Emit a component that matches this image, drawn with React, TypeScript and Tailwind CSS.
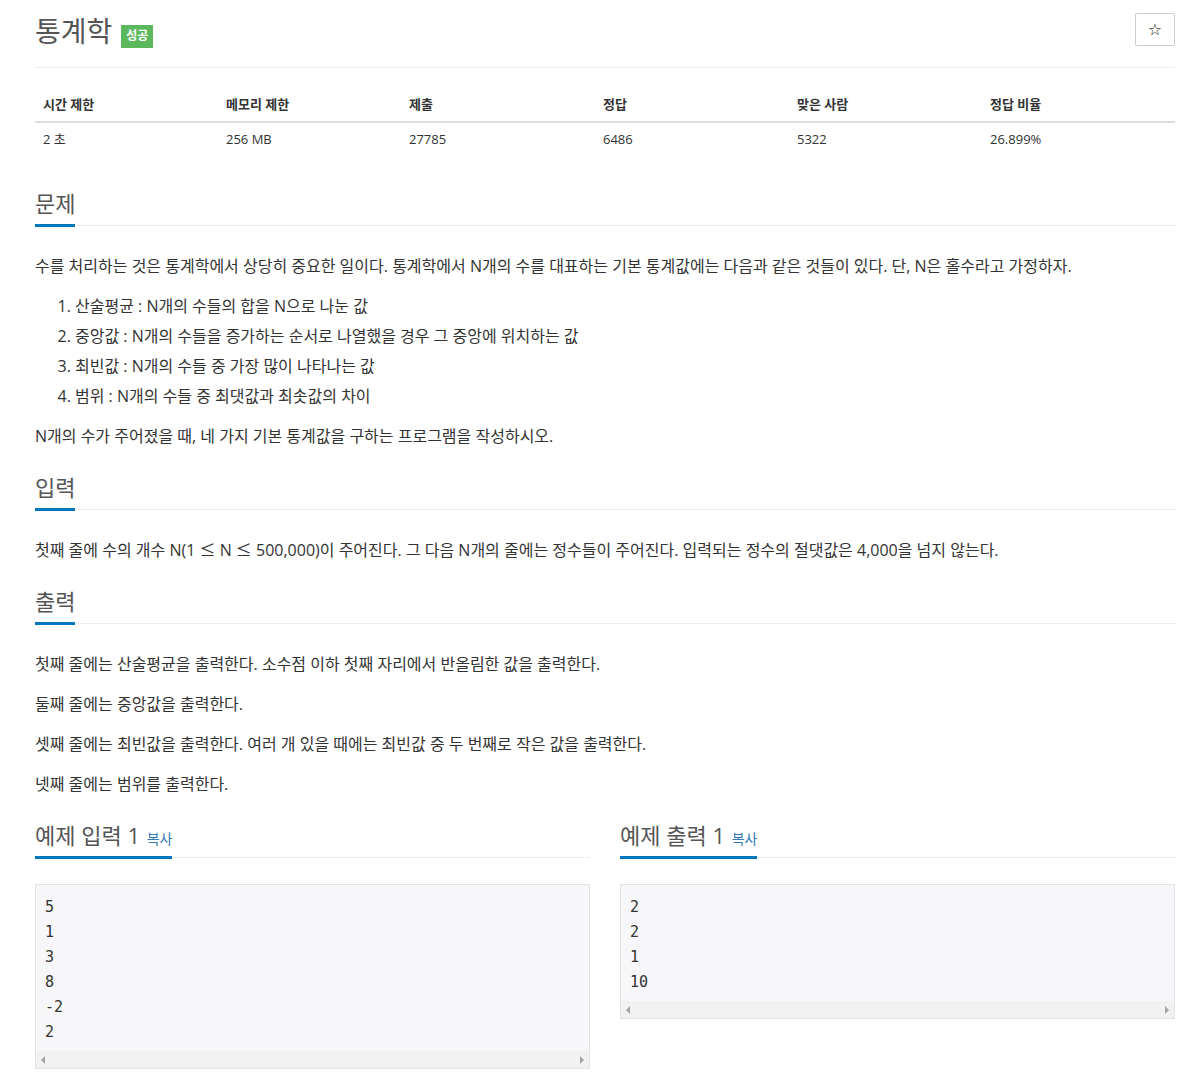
import React from "react";

const H2 = ({ children }: { children: React.ReactNode }) => (
  <h2 className="inline-block h-[38px] -mb-[2px] border-b-[3px] border-[#0076c0] pb-[7px] text-[22px] leading-[28px] font-normal text-[#555] whitespace-nowrap">
    {children}
  </h2>
);

const Heading = ({ children, mt = "mt-[22px]" }: { children: React.ReactNode; mt?: string }) => (
  <div className={`${mt} mb-[25px] border-b border-dotted border-[#dcdcdc]`}>
    <H2>{children}</H2>
  </div>
);

const P = ({ children }: { children: React.ReactNode }) => (
  <p className="mb-[10px] text-[16px] leading-[30px]">{children}</p>
);

const Le = () => <span className="font-['Noto_Sans_CJK_KR',sans-serif] leading-none">≤</span>;

const Scrollbar = () => (
  <div className="flex h-[17px] items-center justify-between bg-[#f1f1f1] px-[5px]">
    <div className="h-0 w-0 border-y-[4px] border-r-[4px] border-y-transparent border-r-[#a3a3a3]" />
    <div className="h-0 w-0 border-y-[4px] border-l-[4px] border-y-transparent border-l-[#a3a3a3]" />
  </div>
);

const Sample = ({ title, lines }: { title: string; lines: string[] }) => (
  <div>
    <div className="mt-[12px] mb-[26px] border-b border-dotted border-[#dcdcdc]">
      <H2>
        {title} <span className="ml-[1px] text-[14px] text-[#337ab7]">복사</span>
      </H2>
    </div>
    <div className="border border-[#e1e1e8] bg-[#f7f7f9]">
      <pre className="px-[9px] pt-[10px] pb-[6px] font-['DejaVu_Sans_Mono',monospace] text-[15px] leading-[25px] text-[#333]">
        {lines.join("\n")}
      </pre>
      <Scrollbar />
    </div>
  </div>
);

export default function App() {
  const cols = ["시간 제한", "메모리 제한", "제출", "정답", "맞은 사람", "정답 비율"];
  const vals = ["2 초", "256 MB", "27785", "6486", "5322", "26.899%"];
  return (
    <div className="min-h-[1087px] w-[1201px] bg-white font-['Open_Sans','Noto_Sans_CJK_KR',sans-serif] text-[#333]">
      <div className="ml-[35px] w-[1140px]">
        <div className="flex h-[68px] items-start justify-between border-b border-[#eee] pt-[13px]">
          <h1 className="flex h-[33px] items-start gap-[9px] font-normal text-[#555]">
            <span className="mt-[2px] text-[28px] leading-[33px]">통계학</span>
            <span className="mt-[12px] bg-[#5cb85c] px-[5px] pt-[3px] pb-[4px] text-[12px] leading-[16px] font-bold text-white">
              성공
            </span>
          </h1>
          <button className="flex h-[33px] w-[40px] items-center justify-center rounded-[2px] border border-[#ccc] bg-white font-['DejaVu_Sans',sans-serif] text-[16px] text-[#222]">
            ☆
          </button>
        </div>

        <div className="mt-[20px] mb-[32px] text-[13px]">
          <div className="grid grid-cols-[183px_183px_194px_194px_193px_193px] border-b-2 border-[#ddd]">
            {cols.map((c) => (
              <div key={c} className="flex h-[33px] items-center px-[8px] font-bold">
                {c}
              </div>
            ))}
          </div>
          <div className="grid grid-cols-[183px_183px_194px_194px_193px_193px]">
            {vals.map((v) => (
              <div key={v} className="flex h-[34px] items-center px-[8px]">
                {v}
              </div>
            ))}
          </div>
        </div>

        <Heading mt="mt-0">문제</Heading>
        <P>
          수를 처리하는 것은 통계학에서 상당히 중요한 일이다. 통계학에서 N개의 수를 대표하는 기본 통계값에는 다음과 같은 것들이 있다. 단, N은 홀수라고 가정하자.
        </P>
        <ol className="mb-[10px] list-decimal pl-[40px] text-[16px] leading-[30px]">
          <li>산술평균 : N개의 수들의 합을 N으로 나눈 값</li>
          <li>중앙값 : N개의 수들을 증가하는 순서로 나열했을 경우 그 중앙에 위치하는 값</li>
          <li>최빈값 : N개의 수들 중 가장 많이 나타나는 값</li>
          <li>범위 : N개의 수들 중 최댓값과 최솟값의 차이</li>
        </ol>
        <P>N개의 수가 주어졌을 때, 네 가지 기본 통계값을 구하는 프로그램을 작성하시오.</P>

        <Heading>입력</Heading>
        <P>
          첫째 줄에 수의 개수 N(1 <Le /> N <Le /> 500,000)이 주어진다. 그 다음 N개의 줄에는 정수들이 주어진다. 입력되는 정수의 절댓값은 4,000을 넘지 않는다.
        </P>

        <Heading>출력</Heading>
        <P>첫째 줄에는 산술평균을 출력한다. 소수점 이하 첫째 자리에서 반올림한 값을 출력한다.</P>
        <P>둘째 줄에는 중앙값을 출력한다.</P>
        <P>셋째 줄에는 최빈값을 출력한다. 여러 개 있을 때에는 최빈값 중 두 번째로 작은 값을 출력한다.</P>
        <P>넷째 줄에는 범위를 출력한다.</P>

        <div className="grid grid-cols-2 items-start gap-[30px]">
          <Sample title="예제 입력 1" lines={["5", "1", "3", "8", "-2", "2"]} />
          <Sample title="예제 출력 1" lines={["2", "2", "1", "10"]} />
        </div>
      </div>
    </div>
  );
}
